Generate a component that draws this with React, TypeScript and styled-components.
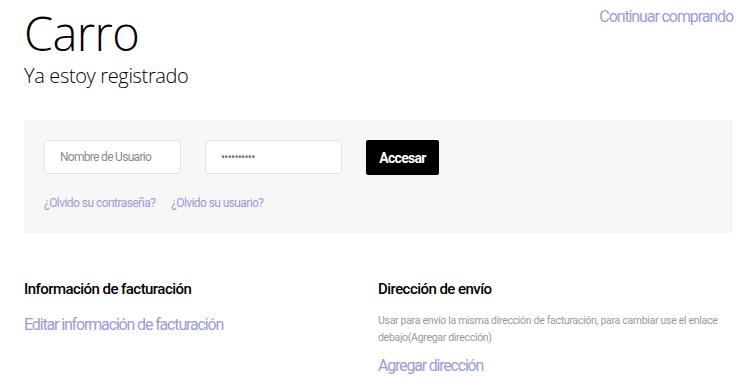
import React from "react";
import styled, { createGlobalStyle } from "styled-components";

const Global = createGlobalStyle`
  html, body { margin: 0; padding: 0; background: #fff; }
  body { font-family: Roboto, "Liberation Sans", sans-serif; }
  * { box-sizing: border-box; }
`;

const Page = styled.div`
  padding: 0 7px 0 24px;
  width: 740px;
`;

const Header = styled.header`
  display: flex;
  justify-content: space-between;
  align-items: flex-start;
`;

const TitleBlock = styled.div`
  display: flex;
  flex-direction: column;
`;

const Title = styled.h1`
  margin: 0;
  font-family: "Open Sans", sans-serif;
  font-weight: 300;
  font-size: 47px;
  line-height: 66px;
  color: #000;
  letter-spacing: -0.6px;
`;

const Subtitle = styled.h2`
  margin: 0;
  font-family: "Open Sans", sans-serif;
  font-weight: 300;
  font-size: 20px;
  line-height: 20px;
  color: #000;
  letter-spacing: -0.35px;
`;

const Link = styled.a<{ $size?: number; $ls?: number }>`
  font-family: Roboto, sans-serif;
  color: #9b9bdc;
  text-decoration: none;
  font-size: ${(p) => p.$size ?? 12}px;
  letter-spacing: ${(p) => p.$ls ?? -0.5}px;
  cursor: pointer;
`;

const TopLink = styled(Link)`
  margin-top: 7px;
  line-height: 20px;
`;

const Panel = styled.section`
  margin-top: 34px;
  background: #f7f7f7;
  padding: 20px 20px 0 20px;
  height: 113px;
`;

const FormRow = styled.div`
  display: flex;
  align-items: flex-start;
  gap: 24px;
`;

const Input = styled.input`
  width: 137px;
  height: 34px;
  border: 1px solid #e3e3e3;
  border-radius: 4px;
  background: #fff;
  padding: 0 15px;
  font-family: Roboto, sans-serif;
  font-size: 12px;
  letter-spacing: -0.7px;
  color: #777;
  outline: none;
  &::placeholder { color: #8a8a8a; }
`;

const Button = styled.button`
  height: 35px;
  width: 73px;
  border: none;
  border-radius: 2px;
  background: #000;
  color: #fff;
  font-family: Roboto, sans-serif;
  font-weight: 700;
  font-size: 14px;
  letter-spacing: -0.7px;
  cursor: pointer;
`;

const LinkRow = styled.div`
  display: flex;
  gap: 16px;
  margin-top: 20px;
  line-height: 16px;
`;

const Columns = styled.div`
  display: grid;
  grid-template-columns: 354px 1fr;
  margin-top: 46px;
`;

const Column = styled.div`
  display: flex;
  flex-direction: column;
`;

const Heading = styled.h3`
  margin: 0;
  font-family: Roboto, sans-serif;
  font-weight: 500;
  font-size: 15px;
  line-height: 20px;
  letter-spacing: -0.55px;
  color: #000;
`;

const BlockLink = styled(Link)`
  line-height: 20px;
  margin-top: 16px;
`;

const Note = styled.p`
  margin: 13px 0 0 0;
  font-family: Roboto, sans-serif;
  font-size: 10.5px;
  line-height: 17px;
  letter-spacing: -0.3px;
  color: #999;
  max-width: 345px;
`;

const NoteLink = styled(Link)`
  line-height: 20px;
  margin-top: 10px;
`;

export default function App() {
  return (
    <>
      <Global />
      <Page>
        <Header>
          <TitleBlock>
            <Title>Carro</Title>
            <Subtitle>Ya estoy registrado</Subtitle>
          </TitleBlock>
          <TopLink $size={16} $ls={-1.1}>Continuar comprando</TopLink>
        </Header>
        <Panel>
          <FormRow>
            <Input placeholder="Nombre de Usuario" />
            <Input type="password" defaultValue="contraseña" />
            <Button>Accesar</Button>
          </FormRow>
          <LinkRow>
            <Link $size={12} $ls={-0.55}>¿Olvido su contraseña?</Link>
            <Link $size={12} $ls={-0.6}>¿Olvido su usuario?</Link>
          </LinkRow>
        </Panel>
        <Columns>
          <Column>
            <Heading>Información de facturación</Heading>
            <BlockLink $size={16} $ls={-1.15}>Editar información de facturación</BlockLink>
          </Column>
          <Column>
            <Heading>Dirección de envío</Heading>
            <Note>
              Usar para envío la misma dirección de facturación, para cambiar use el enlace
              debajo(Agregar dirección)
            </Note>
            <NoteLink $size={16} $ls={-1.2}>Agregar dirección</NoteLink>
          </Column>
        </Columns>
      </Page>
    </>
  );
}
